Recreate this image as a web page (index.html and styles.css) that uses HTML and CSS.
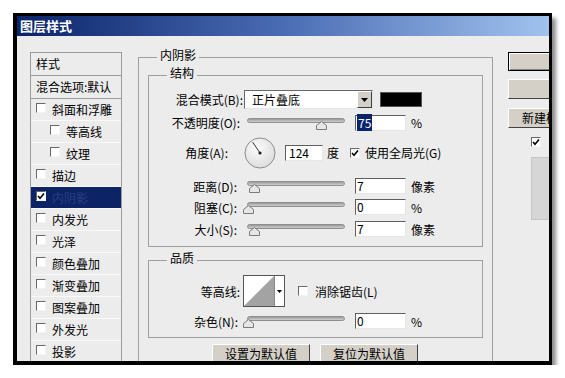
FILE: index.html
```html
<!DOCTYPE html>
<html lang="zh">
<head>
<meta charset="utf-8">
<title>图层样式</title>
<link rel="stylesheet" href="styles.css">
</head>
<body>
<div class="frame">
  <div class="titlebar">图层样式</div>
  <div class="dlg">
    <div class="list">
      <div class="lhead">样式</div>
      <div class="lhead">混合选项:默认</div>
      <div class="item"><span class="cb"></span>斜面和浮雕</div>
      <div class="item sub"><span class="cb"></span>等高线</div>
      <div class="item sub"><span class="cb"></span>纹理</div>
      <div class="item"><span class="cb"></span>描边</div>
      <div class="item sel"><span class="cb on"><svg viewBox="0 0 8 8" width="8" height="8"><path d="M1 4 L3 6.2 L7 1.6" fill="none" stroke="#000" stroke-width="1.6"/></svg></span>内阴影</div>
      <div class="item"><span class="cb"></span>内发光</div>
      <div class="item"><span class="cb"></span>光泽</div>
      <div class="item"><span class="cb"></span>颜色叠加</div>
      <div class="item"><span class="cb"></span>渐变叠加</div>
      <div class="item"><span class="cb"></span>图案叠加</div>
      <div class="item"><span class="cb"></span>外发光</div>
      <div class="item"><span class="cb"></span>投影</div>
    </div>

    <div class="main">
      <div class="group outer">
        <div class="gtitle">内阴影</div>

        <div class="group struct">
          <div class="gtitle">结构</div>

          <div class="row r1">
            <span class="lbl w94">混合模式(B):</span>
            <div class="select"><span class="val">正片叠底</span><span class="arrow"><svg viewBox="0 0 7 4" width="7" height="4"><path d="M0 0 H7 L3.5 4 Z" fill="#000"/></svg></span></div>
            <span class="swatch"></span>
          </div>

          <div class="row r2">
            <span class="lbl w91">不透明度(O):</span>
            <div class="slider m7"><div class="track"></div><svg class="thumb" style="left:76%" viewBox="0 0 11 9" width="11" height="9"><path d="M5.5 0.5 L10.5 4.5 V8.5 H0.5 V4.5 Z" fill="#e6e6e6" stroke="#7a7a7a"/></svg></div>
            <span class="field"><span class="hl">75</span></span>
            <span class="unit">%</span>
          </div>

          <div class="row r3">
            <span class="lbl w79">角度(A):</span>
            <svg class="dial" viewBox="0 0 32 32" width="32" height="32">
              <defs><radialGradient id="dg" cx="0.4" cy="0.35" r="0.7"><stop offset="0" stop-color="#fbfbfb"/><stop offset="1" stop-color="#dcdcdc"/></radialGradient></defs>
              <circle cx="16" cy="16" r="15" fill="url(#dg)" stroke="#8c8c8c"/>
              <path d="M16 16 L8.7 5.2" stroke="#333" stroke-width="1"/>
              <circle cx="16" cy="16" r="1.6" fill="#222"/>
            </svg>
            <span class="field small">124</span>
            <span class="unit u4">度</span>
            <span class="cb on gl"><svg viewBox="0 0 8 8" width="8" height="8"><path d="M1 4 L3 6.2 L7 1.6" fill="none" stroke="#000" stroke-width="1.6"/></svg></span>
            <span class="cbtext">使用全局光(G)</span>
          </div>

          <div class="row r4">
            <span class="lbl w88">距离(D):</span>
            <div class="slider m10"><div class="track"></div><svg class="thumb" style="left:7%" viewBox="0 0 11 9" width="11" height="9"><path d="M5.5 0.5 L10.5 4.5 V8.5 H0.5 V4.5 Z" fill="#e6e6e6" stroke="#7a7a7a"/></svg></div>
            <span class="field">7</span>
            <span class="unit">像素</span>
          </div>

          <div class="row r5">
            <span class="lbl w88">阻塞(C):</span>
            <div class="slider m10"><div class="track"></div><svg class="thumb" style="left:1%" viewBox="0 0 11 9" width="11" height="9"><path d="M5.5 0.5 L10.5 4.5 V8.5 H0.5 V4.5 Z" fill="#e6e6e6" stroke="#7a7a7a"/></svg></div>
            <span class="field">0</span>
            <span class="unit">%</span>
          </div>

          <div class="row r6">
            <span class="lbl w88">大小(S):</span>
            <div class="slider m10"><div class="track"></div><svg class="thumb" style="left:7%" viewBox="0 0 11 9" width="11" height="9"><path d="M5.5 0.5 L10.5 4.5 V8.5 H0.5 V4.5 Z" fill="#e6e6e6" stroke="#7a7a7a"/></svg></div>
            <span class="field">7</span>
            <span class="unit">像素</span>
          </div>
        </div>

        <div class="group quality">
          <div class="gtitle">品质</div>
          <div class="row q1">
            <span class="lbl w91">等高线:</span>
            <span class="contour">
              <svg viewBox="0 0 30 30" width="30" height="30"><rect width="30" height="30" fill="#fff"/><path d="M0 30 L30 0 V30 Z" fill="#a3a3a3"/></svg>
              <span class="carrow"><svg viewBox="0 0 5 3" width="5" height="3"><path d="M0 0 H5 L2.5 3 Z" fill="#000"/></svg></span>
            </span>
            <span class="cb aa"></span>
            <span class="cbtext">消除锯齿(L)</span>
          </div>
          <div class="row q2">
            <span class="lbl w89">杂色(N):</span>
            <div class="slider m9"><div class="track"></div><svg class="thumb" style="left:1%" viewBox="0 0 11 9" width="11" height="9"><path d="M5.5 0.5 L10.5 4.5 V8.5 H0.5 V4.5 Z" fill="#e6e6e6" stroke="#7a7a7a"/></svg></div>
            <span class="field">0</span>
            <span class="unit">%</span>
          </div>
        </div>

        <div class="btnrow">
          <span class="btn">设置为默认值</span>
          <span class="btn">复位为默认值</span>
        </div>
      </div>
    </div>

    <div class="side">
      <span class="sbtn def"></span>
      <span class="sbtn b2"></span>
      <span class="sbtn b3">新建样式</span>
      <div class="prevrow">
        <span class="cb on"><svg viewBox="0 0 8 8" width="8" height="8"><path d="M1 4 L3 6.2 L7 1.6" fill="none" stroke="#000" stroke-width="1.6"/></svg></span>
      </div>
      <div class="preview"></div>
    </div>
  </div>
</div>
</body>
</html>
```

FILE: styles.css
```css
html, body {
  margin: 0;
  background: #fff;
}
body {
  font-family: "Noto Sans CJK SC", "Liberation Sans", sans-serif;
  font-size: 12px;
  color: #000;
}
.frame {
  margin: 13px 0 0 13px;
  width: 532px;
  height: 345px;
  border-style: solid;
  border-color: #000;
  border-width: 3px 3px 4px 4px;
  box-shadow: 4px 5px 4px rgba(0, 0, 0, 0.45);
  overflow: hidden;
  background: #ececec;
}
.titlebar {
  height: 20px;
  line-height: 20px;
  padding-left: 3px;
  color: #fff;
  font-weight: bold;
  font-size: 13px;
  background: linear-gradient(90deg, #0a246a 0%, #4a6cb4 50%, #a0c2ee 100%);
}
.dlg {
  display: flex;
  align-items: flex-start;
  padding: 16px 0 0 13px;
}

/* left list */
.list {
  width: 92px;
  flex: none;
  box-sizing: border-box;
  border: 1px solid #9c9c9c;
}
.lhead {
  height: 22px;
  line-height: 22px;
  padding-left: 5px;
  border-bottom: 1px solid #9c9c9c;
  white-space: nowrap;
}
.item {
  height: 21px;
  display: flex;
  align-items: center;
  padding-left: 5px;
  border-bottom: 1px solid #f9f9f9;
  white-space: nowrap;
}
.item.sub { padding-left: 19px; }
.item .cb { margin-right: 6px; margin-top: -3px; }
.item.sel {
  background: #0c2466;
  color: #2a3f80;
}

.cb {
  width: 10px;
  height: 10px;
  box-sizing: border-box;
  flex: none;
  border: 1px solid;
  border-color: #686868 #f4f4f4 #f4f4f4 #686868;
  background: #fff;
  display: inline-flex;
  align-items: center;
  justify-content: center;
}
.cb svg { display: block; }

/* main */
.main {
  width: 355px;
  flex: none;
  margin: 5px 0 0 16px;
}
.group {
  border: 1px solid #9f9f9f;
}
.outer {
  height: 312px;
  padding: 0 9px;
  box-sizing: border-box;
}
.gtitle {
  display: table;
  height: 14px;
  line-height: 14px;
  margin: -10px 0 0 9px;
  padding: 0 3px;
  background: #ececec;
}
.struct .gtitle, .quality .gtitle { margin-left: 18px; }
.struct {
  margin-top: 13px;
  padding-bottom: 9px;
}
.quality {
  margin-top: 13px;
  padding-bottom: 8px;
}
.row {
  display: flex;
  align-items: center;
  white-space: nowrap;
}
.r1 { margin-top: 10px; height: 19px; }
.r2 { margin-top: 5px; height: 17px; }
.r3 { margin-top: 6px; height: 31px; }
.r4 { margin-top: 10px; height: 16px; }
.r5 { margin-top: 5px; height: 16px; }
.r6 { margin-top: 6px; height: 16px; }
.q1 { margin-top: 10px; height: 32px; }
.q2 { margin-top: 6px; height: 16px; }

.lbl { flex: none; text-align: right; }
.w94 { width: 94px; }
.w91 { width: 91px; }
.w89 { width: 89px; }
.w88 { width: 88px; }
.w79 { width: 79px; }

.select {
  margin-left: 1px;
  width: 129px;
  height: 19px;
  box-sizing: border-box;
  display: flex;
  background: #fff;
  border: 1px solid;
  border-color: #6a6a6a #e6e6e6 #e6e6e6 #6a6a6a;
}
.select .val {
  flex: 1;
  padding-left: 7px;
  line-height: 17px;
}
.select .arrow {
  width: 15px;
  height: 17px;
  box-sizing: border-box;
  background: #d4d0c8;
  border: 1px solid;
  border-color: #fff #404040 #404040 #fff;
  display: flex;
  align-items: center;
  justify-content: center;
}
.swatch {
  margin-left: 7px;
  width: 42px;
  height: 15px;
  box-sizing: border-box;
  background: #000;
  border: 1px solid #555;
  flex: none;
}

.slider {
  position: relative;
  width: 98px;
  height: 16px;
  flex: none;
}
.m7 { margin-left: 7px; }
.m9 { margin-left: 9px; }
.m10 { margin-left: 10px; }
.track {
  margin-top: 3px;
  height: 5px;
  box-sizing: border-box;
  border-radius: 3px;
  border: 1px solid #8e8e8e;
  background: linear-gradient(#9a9a9a, #d0d0d0);
}
.thumb {
  position: absolute;
  top: 6px;
  margin-left: -5px;
  display: block;
}

.field {
  margin-left: 10px;
  width: 51px;
  height: 16px;
  box-sizing: border-box;
  flex: none;
  background: #fff;
  border: 1px solid;
  border-color: #5e5e5e #e6e6e6 #e6e6e6 #5e5e5e;
  padding-left: 1px;
  line-height: 14px;
}
.field.small {
  margin-left: 9px;
  width: 38px;
  padding-left: 3px;
}
.hl {
  background: #0a246a;
  color: #fff;
  padding: 0 1px;
}
.unit { margin-left: 5px; }
.unit.u4 { margin-left: 4px; }

.dial {
  margin-left: 16px;
  flex: none;
  display: block;
}
.cb.gl { margin-left: 11px; }
.cbtext { margin-left: 5px; }

.contour {
  margin-left: 3px;
  width: 42px;
  height: 32px;
  box-sizing: border-box;
  flex: none;
  display: flex;
  border: 1px solid #555;
  background: #fff;
}
.contour svg { display: block; }
.carrow {
  flex: 1;
  border-left: 1px solid #888;
  display: flex;
  align-items: center;
  justify-content: center;
}
.cb.aa { margin-left: 13px; }
.q1 .cbtext { margin-left: 7px; }

.btnrow {
  display: flex;
  gap: 10px;
  margin: 6px 0 0 64px;
}
.btn {
  width: 98px;
  height: 20px;
  box-sizing: border-box;
  text-align: center;
  line-height: 18px;
  background: #d4d0c8;
  border: 1px solid;
  border-color: #fff #404040 #404040 #fff;
  flex: none;
}

/* side */
.side {
  width: 110px;
  flex: none;
  margin-left: 15px;
  display: flex;
  flex-direction: column;
  align-items: flex-start;
}
.sbtn {
  width: 104px;
  height: 20px;
  box-sizing: border-box;
  line-height: 18px;
  padding-left: 13px;
  background: #d4d0c8;
  border: 1px solid;
  border-color: #fff #404040 #404040 #fff;
  white-space: nowrap;
}
.sbtn.def {
  height: 19px;
  border-color: #000;
  box-shadow: inset 1px 1px 0 #fff, inset -1px -1px 0 #808080;
}
.sbtn.b2 { margin-top: 8px; }
.sbtn.b3 { margin-top: 9px; }
.prevrow {
  margin: 9px 0 0 23px;
  display: flex;
  align-items: center;
}
.preview {
  margin: 10px 0 0 23px;
  width: 60px;
  height: 63px;
  box-sizing: border-box;
  background: #d6d6d6;
  border: 1px solid #c4c4c4;
}
```
